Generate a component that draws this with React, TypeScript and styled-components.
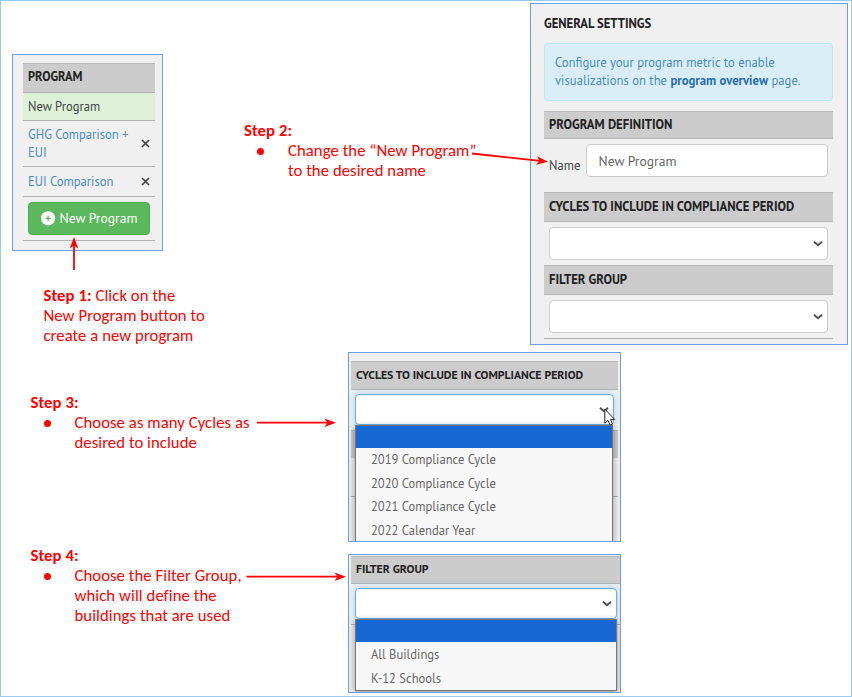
import React from 'react';
import styled, { createGlobalStyle, css } from 'styled-components';

const GlobalStyle = createGlobalStyle`
  *, *::before, *::after { box-sizing: border-box; }
  body { margin: 0; background: #fff; }
`;

const uiFont = '"PT Sans", "Noto Sans", sans-serif';
const noteFont = 'Carlito, Lato, sans-serif';

const Slide = styled.main`
  position: relative;
  width: 852px;
  height: 697px;
  overflow: hidden;
  border: 1px solid #9acbee;
  background: #fff;
`;

const Row = styled.section<{ $height: number }>`
  display: flex;
  align-items: flex-start;
  height: ${(p) => p.$height}px;
`;

const ProgramColumn = styled.div`
  width: 243px;
  padding: 53px 0 0 11px;
`;

const StepTwoColumn = styled.div`
  width: 286px;
  padding-top: 119px;
`;

const NotesColumn = styled.div`
  display: flex;
  flex-direction: column;
  gap: 93px;
  width: 347px;
  padding: 40px 0 0 29.5px;
`;

const PickerColumn = styled.div`
  display: flex;
  flex-direction: column;
  gap: 12px;
  width: 273px;
`;

/* Annotations */

const Note = styled.div`
  font: 400 16.67px/20px ${noteFont};
  letter-spacing: 0.08px;
  color: #f00;
  white-space: nowrap;
`;

const StepOneNote = styled(Note)`
  margin: 34px 0 0 31.5px;
`;

const NoteItem = styled.div`
  display: flex;
`;

const Bullet = styled.span`
  flex: none;
  width: 7px;
  height: 7px;
  margin: 7.5px 24px 0 13px;
  border-radius: 50%;
  background: #f00;
`;

/* Captured panels */

const Panel = styled.div`
  position: relative;
  border: 1px solid #6d9eeb;
  background: #f0f0f0;
  font: 400 12.6px/18px ${uiFont};
  color: #444;
  white-space: nowrap;
`;

const ProgramPanel = styled(Panel)`
  width: 151px;
  height: 197px;
  padding: 8px 7px 0 10px;
`;

const SettingsPanel = styled(Panel)`
  width: 318px;
  height: 342px;
  margin-top: 2px;
  padding: 0 14px 0 13px;
`;

const PickerPanel = styled(Panel)<{ $height: number; $top: number; $right: number }>`
  height: ${(p) => p.$height}px;
  padding: ${(p) => p.$top}px ${(p) => p.$right}px 0 2px;
  overflow: hidden;
`;

const SectionHeader = styled.div<{ $height: number; $size?: number; $bottom?: number }>`
  display: flex;
  align-items: center;
  height: ${(p) => p.$height}px;
  padding: 0 5px ${(p) => p.$bottom ?? 1}px;
  border-top: 1px solid #b9b9b9;
  border-bottom: 1px solid #b4b4b4;
  background: #ccc;
  font-size: ${(p) => p.$size ?? 12.7}px;
  font-weight: 700;
  color: #222;
`;

const ProgramRow = styled.div<{ $height: number; $active?: boolean }>`
  display: flex;
  align-items: center;
  justify-content: space-between;
  height: ${(p) => p.$height}px;
  padding: 0 5px;
  border-bottom: 1px solid #b4b4b4;
  line-height: 18.5px;
  ${(p) => p.$active && css`background: #dff0d8;`}
`;

const ProgramLink = styled.a`
  color: #4a8ac4;
`;

const NewProgramButton = styled.button`
  display: flex;
  align-items: center;
  justify-content: center;
  gap: 4px;
  width: 122px;
  height: 33px;
  padding: 0;
  border: 1px solid #4cae4c;
  border-radius: 4px;
  background: #5cb85c;
  font: 400 13.6px/18px ${uiFont};
  color: #fff;
`;

const SettingsTitle = styled.h2`
  margin: 0;
  padding: 10px 0 11px;
  font: 700 12.65px/18px ${uiFont};
  color: #222;
`;

const Alert = styled.div`
  height: 58px;
  margin-bottom: 10px;
  padding: 10px;
  border: 1px solid #bce8f1;
  border-radius: 4px;
  background: #d9edf7;
  font-size: 12.7px;
  line-height: 17.5px;
  color: #4a8db3;

  b { color: #2a6fb0; }
`;

const NameRow = styled.div`
  display: flex;
  align-items: flex-start;
  gap: 5px;
  height: 53px;
  padding: 5px 5px 0;
`;

const NameLabel = styled.label`
  width: 32px;
  padding-top: 12px;
`;

const NameInput = styled.div`
  flex: 1;
  height: 33px;
  padding: 7px 11.5px;
  border: 1px solid #ccc;
  border-radius: 4px;
  background: #fff;
  font-size: 13.6px;
  color: #666;
`;

const Field = styled.div<{ $height: number; $right?: number }>`
  height: ${(p) => p.$height}px;
  padding: 5px ${(p) => p.$right ?? 5}px 0 5px;
`;

const LastField = styled(Field)`
  border-bottom: 1px solid #b0b0b0;
`;

const PickerField = styled(Field)`
  padding-top: 4px;
  padding-left: 4px;
`;

const SelectBox = styled.div<{ $height?: number; $focused?: boolean }>`
  display: flex;
  align-items: center;
  justify-content: flex-end;
  height: ${(p) => p.$height ?? 33}px;
  padding-right: 4px;
  border: 1px solid #ccc;
  border-radius: 4px;
  background: #fff;
  ${(p) => p.$focused && css`
    border-color: #66afe9;
    box-shadow: inset 0 1px 1px rgba(0, 0, 0, 0.06), 0 0 7px rgba(102, 175, 233, 0.5);
  `}
`;

const Menu = styled.div<{ $top: number; $right: number; $height: number }>`
  position: absolute;
  top: ${(p) => p.$top}px;
  left: 6px;
  right: ${(p) => p.$right}px;
  height: ${(p) => p.$height}px;
  border: 1px solid #767676;
  background: #f7f7f7;
  box-shadow: 0 2px 7px rgba(0, 0, 0, 0.4);
`;

const MenuOption = styled.div<{ $selected?: boolean }>`
  height: 23.5px;
  padding-left: 15px;
  line-height: 23px;
  color: #666;
  ${(p) => p.$selected && css`height: 22px; background: #1967d2;`}
`;

const FilterOption = styled(MenuOption)`
  line-height: 25px;
`;

const CoveredHeader = styled.div`
  height: 28px;
  margin-top: 5px;
  border-top: 1px solid #b4b4b4;
  background: #ccc;
`;

const CoveredLine = styled.div<{ $gap: number }>`
  margin-top: ${(p) => p.$gap}px;
  border-top: 1px solid #b4b4b4;
`;

const Overlay = styled.svg`
  position: absolute;
  top: -1px;
  left: -1px;
  pointer-events: none;
`;

const Chevron = () => (
  <svg width="10" height="7" viewBox="0 0 10 7" fill="none">
    <path d="M1 1.8 L5 5.2 L9 1.8" stroke="#505050" strokeWidth="2" />
  </svg>
);

const RemoveIcon = () => (
  <svg width="9" height="9" viewBox="0 0 9 9">
    <path d="M1 1 L8 8 M8 1 L1 8" stroke="#444" strokeWidth="1.7" />
  </svg>
);

const PlusCircle = () => (
  <svg width="15" height="15" viewBox="0 0 15 15">
    <circle cx="7.1" cy="7.3" r="7.1" fill="#fff" />
    <path d="M7.1 4.7 V9.9 M4.5 7.3 H9.7" stroke="#5cb85c" strokeWidth="1.2" />
  </svg>
);

const Arrow = ({ x1, y1, x2, y2 }: { x1: number; y1: number; x2: number; y2: number }) => {
  const angle = (Math.atan2(y2 - y1, x2 - x1) * 180) / Math.PI;
  const length = Math.hypot(x2 - x1, y2 - y1);
  return (
    <g transform={`translate(${x1} ${y1}) rotate(${angle})`}>
      <path d={`M0 0 H${length - 8}`} stroke="#f00" strokeWidth="1.8" />
      <path d={`M${length} 0 l-11.5 -4.2 l3 4.2 l-3 4.2 z`} fill="#f00" />
    </g>
  );
};

const cycles = ['2019 Compliance Cycle', '2020 Compliance Cycle', '2021 Compliance Cycle', '2022 Calendar Year'];
const filterGroups = ['All Buildings', 'K-12 Schools'];

export default function App() {
  return (
    <Slide>
      <GlobalStyle />
      <Row $height={351}>
        <ProgramColumn>
          <ProgramPanel>
            <SectionHeader $height={29.5} $size={12.4} $bottom={3}>PROGRAM</SectionHeader>
            <ProgramRow $height={28} $active>New Program</ProgramRow>
            <ProgramRow $height={46.5}>
              <ProgramLink>GHG Comparison +<br />EUI</ProgramLink>
              <RemoveIcon />
            </ProgramRow>
            <ProgramRow $height={29.5}>
              <ProgramLink>EUI Comparison</ProgramLink>
              <RemoveIcon />
            </ProgramRow>
            <ProgramRow $height={44}>
              <NewProgramButton><PlusCircle />New Program</NewProgramButton>
            </ProgramRow>
          </ProgramPanel>
          <StepOneNote>
            <b>Step 1:</b> Click on the<br />New Program button to<br />create a new program
          </StepOneNote>
        </ProgramColumn>

        <StepTwoColumn>
          <Note>
            <b>Step 2:</b>
            <NoteItem><Bullet /><span>Change the “New Program”<br />to the desired name</span></NoteItem>
          </Note>
        </StepTwoColumn>

        <SettingsPanel>
          <SettingsTitle>GENERAL SETTINGS</SettingsTitle>
          <Alert>
            Configure your program metric to enable<br />
            visualizations on the <b>program overview</b> page.
          </Alert>
          <SectionHeader $height={28}>PROGRAM DEFINITION</SectionHeader>
          <NameRow>
            <NameLabel>Name</NameLabel>
            <NameInput>New Program</NameInput>
          </NameRow>
          <SectionHeader $height={30}>CYCLES TO INCLUDE IN COMPLIANCE PERIOD</SectionHeader>
          <Field $height={43}><SelectBox><Chevron /></SelectBox></Field>
          <SectionHeader $height={30}>FILTER GROUP</SectionHeader>
          <LastField $height={44}><SelectBox><Chevron /></SelectBox></LastField>
        </SettingsPanel>
      </Row>

      <Row $height={344}>
        <NotesColumn>
          <Note>
            <b>Step 3:</b>
            <NoteItem><Bullet /><span>Choose as many Cycles as<br />desired to include</span></NoteItem>
          </Note>
          <Note>
            <b>Step 4:</b>
            <NoteItem>
              <Bullet />
              <span>Choose the Filter Group,<br />which will define the<br />buildings that are used</span>
            </NoteItem>
          </Note>
        </NotesColumn>

        <PickerColumn>
          <PickerPanel $height={190} $top={8} $right={2}>
            <SectionHeader $height={29} $size={11.75} $bottom={2}>CYCLES TO INCLUDE IN COMPLIANCE PERIOD</SectionHeader>
            <PickerField $height={35} $right={4}><SelectBox $height={31} $focused><Chevron /></SelectBox></PickerField>
            <CoveredHeader />
            <CoveredLine $gap={38} />
            <Menu $top={72} $right={7} $height={130}>
              <MenuOption $selected />
              {cycles.map((name) => <MenuOption key={name}>{name}</MenuOption>)}
            </Menu>
          </PickerPanel>
          <PickerPanel $height={139} $top={1} $right={0}>
            <SectionHeader $height={28} $size={11.8} $bottom={2}>FILTER GROUP</SectionHeader>
            <PickerField $height={35} $right={3}><SelectBox $height={31} $focused><Chevron /></SelectBox></PickerField>
            <CoveredLine $gap={5} />
            <Menu $top={64} $right={3} $height={72}>
              <FilterOption $selected />
              {filterGroups.map((name) => <FilterOption key={name}>{name}</FilterOption>)}
            </Menu>
          </PickerPanel>
        </PickerColumn>
      </Row>

      <Overlay width="852" height="697" viewBox="0 0 852 697">
        <Arrow x1={74} y1={270} x2={74} y2={237} />
        <Arrow x1={472} y1={153.5} x2={548} y2={161.7} />
        <Arrow x1={257} y1={422.7} x2={336} y2={422.7} />
        <Arrow x1={246.5} y1={576.7} x2={346} y2={576.7} />
        <path
          d="M604.8 409 V423.2 L608 420.3 L610.2 425 L612.6 424 L610.5 419.4 H614.6 Z"
          fill="#fff"
          stroke="#222"
          strokeWidth="1"
        />
      </Overlay>
    </Slide>
  );
}
